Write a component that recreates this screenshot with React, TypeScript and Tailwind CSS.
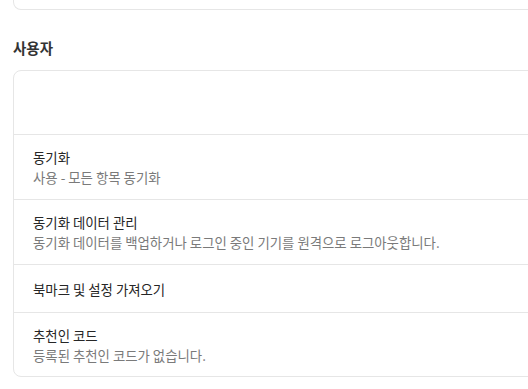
import React from "react";

const font = { fontFamily: '"Noto Sans CJK KR", "Noto Sans", sans-serif' };

function Row({ title, sub, h }: { title?: string; sub?: string; h: string }) {
  return (
    <div className={`flex flex-col justify-center border-t border-[#e6e6e6] pl-[19px] ${h}`}>
      {title && <div className="text-[13.4px] leading-[20px] text-[#262626]">{title}</div>}
      {sub && <div className="text-[13.4px] leading-[20px] text-[#7a7a7a]">{sub}</div>}
    </div>
  );
}

export default function App() {
  return (
    <div className="w-[528px] h-[389px] overflow-hidden bg-white" style={font}>
      <div className="ml-[13px] w-[600px] h-[11px] -mt-px border border-t-0 border-[#e6e6e6] rounded-b-[8px]" />
      <div className="ml-[13px] mt-[28px] h-[20px] flex items-center text-[14.5px] font-bold text-[#333333]">
        사용자
      </div>
      <div className="ml-[13px] mt-[12px] w-[600px] border border-[#e6e6e6] rounded-[8px] overflow-hidden">
        <div className="h-[63px]" />
        <Row h="h-[65px]" title="동기화" sub="사용 - 모든 항목 동기화" />
        <Row h="h-[65px]" title="동기화 데이터 관리" sub="동기화 데이터를 백업하거나 로그인 중인 기기를 원격으로 로그아웃합니다." />
        <Row h="h-[48px]" title="북마크 및 설정 가져오기" />
        <Row h="h-[64px]" title="추천인 코드" sub="등록된 추천인 코드가 없습니다." />
      </div>
    </div>
  );
}
